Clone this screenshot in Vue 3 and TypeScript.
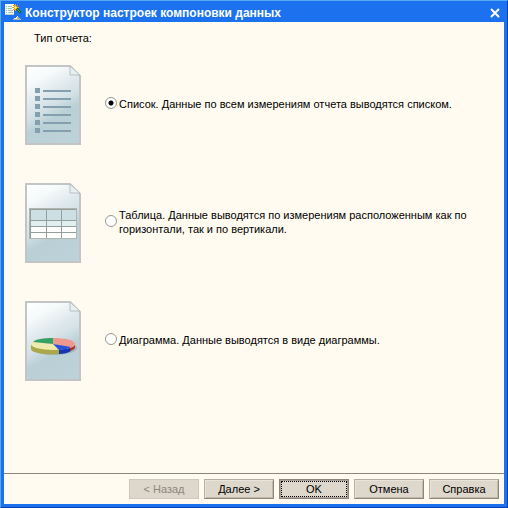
<script setup lang="ts">
import { ref } from 'vue'

type ReportType = 'list' | 'table' | 'chart'

interface ReportOption {
  id: ReportType
  text: string
}

const options: ReportOption[] = [
  { id: 'list', text: 'Список. Данные по всем измерениям отчета выводятся списком.' },
  { id: 'table', text: 'Таблица. Данные выводятся по измерениям расположенным как по горизонтали, так и по вертикали.' },
  { id: 'chart', text: 'Диаграмма. Данные выводятся в виде диаграммы.' },
]

const selected = ref<ReportType>('list')
const listRows: number[] = [23, 31, 39, 47, 55, 63]
</script>

<template>
  <div class="window">
    <header class="titlebar">
      <svg class="app-icon" viewBox="0 0 16 16" width="16" height="16" aria-hidden="true" shape-rendering="crispEdges">
        <path d="M0 0h9v11H0z" fill="#f4faf0" />
        <path d="M0 10h9v1H0z" fill="#b5d4bb" />
        <path d="M1 2h1v1H1zM3 2h4v1H3zM1 4h1v1H1zM3 4h4v1H3zM1 6h1v1H1zM3 6h5v1H3zM1 8h1v1H1zM3 8h5v1H3z" fill="#a3c4b0" />
        <path d="M10 0h1v7h-1zM7 3h7v1H7zM8 1h2v1H8zM12 1h1v1h-1zM8 5h2v1H8zM9 2h3v3H9z" fill="#ff9a20" />
        <path d="M9 3h3v1H9zM10 2h1v3h-1z" fill="#ffe23c" />
        <path d="M10 3h1v1h-1z" fill="#fff" />
        <path d="M12 4h1v1h1v1h1v1h1v2h-2V8h-1V7h-1V6h-1V5h1z" fill="#1d5c14" />
        <path d="M12 5h1v1h1v1h1v1h-1V7h-1V6h-1z" fill="#43c51d" />
        <path d="M12 12h1v1h1v1h1v1h1v1H8v-1h2v-1h1v-1h1z" fill="#b0b6b4" />
        <path d="M12 12h1v1h-1v2H9v-1h2v-1h1z" fill="#fffbe8" />
      </svg>
      <h1 class="title">Конструктор настроек компоновки данных</h1>
      <button class="close" type="button" aria-label="Закрыть">
        <svg viewBox="0 0 10 10" width="10" height="10" aria-hidden="true">
          <path d="M1 1l8 8M9 1l-8 8" stroke="#fff" stroke-width="2" />
        </svg>
      </button>
    </header>

    <main class="content">
      <fieldset class="report-types">
        <legend>Тип отчета:</legend>
        <label v-for="option in options" :key="option.id" class="option">
          <svg class="doc" viewBox="0 0 56 80" width="56" height="80" aria-hidden="true">
            <defs>
              <linearGradient :id="`paper-${option.id}`" gradientUnits="userSpaceOnUse" x1="6" y1="0" x2="46" y2="70">
                <stop offset="0" stop-color="#fff" />
                <stop offset="0.2" stop-color="#f6fafa" />
                <stop offset="0.42" stop-color="#dfe9ed" />
                <stop offset="0.56" stop-color="#d3e1e6" />
                <stop offset="0.72" stop-color="#b9d0d6" />
                <stop offset="1" stop-color="#bcd2d8" />
              </linearGradient>
            </defs>
            <path d="M1 1H45L55 11V79H1Z" :fill="`url(#paper-${option.id})`" stroke="#c3c4c6" stroke-width="2" />
            <path d="M45 1V10H55Z" fill="#e6f0f2" stroke="#b9bec1" />

            <g v-if="option.id === 'list'" fill="#849fad" shape-rendering="crispEdges">
              <template v-for="y in listRows" :key="y">
                <rect x="10" :y="y" width="5" height="5" />
                <rect x="18" :y="y + 2" width="28" height="2" />
              </template>
            </g>

            <g v-else-if="option.id === 'table'" shape-rendering="crispEdges">
              <rect x="4" y="25" width="48" height="31" fill="#b1b5b0" />
              <rect x="5" y="26" width="46" height="29" fill="#959e99" />
              <path d="M6 27h15v10H6zM22 27h14v10H22zM37 27h14v10H37z" fill="#cce0e4" />
              <path d="M6 38h15v5H6zM22 38h14v5H22zM37 38h14v5H37z" fill="#e0f0f1" />
              <path d="M6 44h15v5H6zM22 44h14v5H22zM37 44h14v5H37zM6 50h15v5H6zM22 50h14v5H22zM37 50h14v5H37z" fill="#fff" />
            </g>

            <g v-else>
              <ellipse cx="29" cy="47" rx="23" ry="7" fill="#667a80" opacity="0.3" />
              <path d="M6 43v5c1 4 13 6 28 5V47z" fill="#aaa84b" />
              <path d="M34 47v6c5 0 9-1 12-3v-5z" fill="#1735ac" />
              <path d="M45 45v5c4-1 5-3 5-4v-4z" fill="#b52e24" />
              <ellipse cx="28" cy="43" rx="22" ry="6" fill="#efebae" />
              <path d="M28 43V37C40 37 50 39 50 43C50 45 48 46 45 47Z" fill="#ee998f" />
              <path d="M28 43L46 46C42 48 38 49 34 49Z" fill="#2951d9" />
              <path d="M28 43V37C18 37 11 38 8 41Z" fill="#35a164" />
            </g>
          </svg>
          <input v-model="selected" class="radio" type="radio" name="report-type" :value="option.id" />
          <span class="option-text">{{ option.text }}</span>
        </label>
      </fieldset>
    </main>

    <footer class="actions">
      <button class="btn" type="button" disabled>&lt; Назад</button>
      <button class="btn" type="button">Далее &gt;</button>
      <button class="btn primary" type="button"><span class="focus-ring">OK</span></button>
      <button class="btn" type="button">Отмена</button>
      <button class="btn" type="button">Справка</button>
    </footer>
  </div>
</template>

<style>
body {
  margin: 0;
}
</style>

<style scoped>
.window {
  box-sizing: border-box;
  min-height: 100vh;
  display: flex;
  flex-direction: column;
  padding: 0 3px 3px;
  border: 1px solid;
  border-color: #55acf5 #0a3db0 #0a3db0 #55acf5;
  background: #1c72ee;
  color: #000;
  font: 11px/14px "Liberation Sans", Arial, sans-serif;
}

.titlebar {
  display: flex;
  align-items: center;
  height: 21px;
  padding: 0 4px 0 1px;
}

.app-icon {
  flex: none;
  margin-top: 1px;
}

.title {
  flex: 1;
  margin: 2px 0 0 4px;
  color: #fff;
  font: bold 12px/16px "Liberation Sans", Arial, sans-serif;
  white-space: nowrap;
}

.close {
  display: flex;
  padding: 0;
  border: 0;
  margin-top: 2px;
  background: none;
}

.content {
  flex: 1;
  padding: 9px 20px 0 21px;
  background: #fffbf0;
}

.report-types {
  min-width: 0;
  margin: 0;
  padding: 0;
  border: 0;
}

legend {
  padding: 0 0 0 9px;
  margin-bottom: 20px;
}

.option {
  display: flex;
  align-items: center;
  height: 80px;
  margin-bottom: 38px;
}

.doc {
  flex: none;
}

.radio {
  appearance: none;
  box-sizing: border-box;
  flex: none;
  width: 12px;
  height: 12px;
  margin: 0 2px 4px 24px;
  border: 1px solid #9a978f;
  border-radius: 50%;
  background: #fff;
}

.radio:checked {
  background: radial-gradient(circle, #000 0 2px, #fff 3px);
}

.option-text {
  flex: 1;
  padding-bottom: 2px;
}

.actions {
  display: flex;
  justify-content: flex-end;
  gap: 5px;
  padding: 5px;
  border-top: 1px solid #8c877c;
  background: #fffbf0;
}

.btn {
  box-sizing: border-box;
  width: 70px;
  height: 20px;
  padding: 0;
  border: 1px solid;
  border-color: #b5afa3 #8c8678 #8c8678 #b5afa3;
  box-shadow: inset 1px 1px #e9e4da, inset -1px -1px #c0b9ac;
  background: #ddd7cc;
  color: #000;
  font: inherit;
}

.btn:disabled {
  border-color: #cec9be;
  box-shadow: none;
  color: #8c887e;
}

.primary {
  padding: 1px;
  border: 1px solid #8c8678;
  box-shadow: inset 0 0 0 1px #aaa498;
}

.focus-ring {
  display: block;
  border: 1px dotted #000;
}
</style>
